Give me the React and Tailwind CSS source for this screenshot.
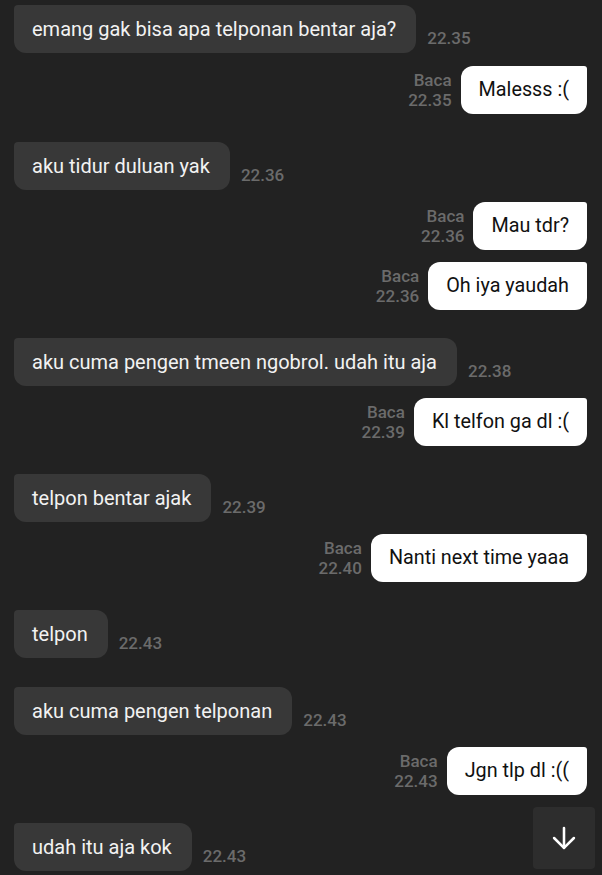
import { ArrowDown } from "lucide-react";

const messages = [
  { from: "them", text: "emang gak bisa apa telponan bentar aja?", time: "22.35" },
  { from: "me", text: "Malesss :(", time: "22.35" },
  { from: "them", text: "aku tidur duluan yak", time: "22.36" },
  { from: "me", text: "Mau tdr?", time: "22.36" },
  { from: "me", text: "Oh iya yaudah", time: "22.36" },
  { from: "them", text: "aku cuma pengen tmeen ngobrol. udah itu aja", time: "22.38" },
  { from: "me", text: "Kl telfon ga dl :(", time: "22.39" },
  { from: "them", text: "telpon bentar ajak", time: "22.39" },
  { from: "me", text: "Nanti next time yaaa", time: "22.40" },
  { from: "them", text: "telpon", time: "22.43" },
  { from: "them", text: "aku cuma pengen telponan", time: "22.43" },
  { from: "me", text: "Jgn tlp dl :((", time: "22.43" },
  { from: "them", text: "udah itu aja kok", time: "22.43" },
];

const Incoming = ({ text, time, space }) => (
  <div className={`flex items-end gap-[11px] pl-[14px] ${space}`}>
    <div className="h-[48px] flex items-center bg-[#383838] text-[#f2f2f2] rounded-[12px] rounded-tl-[4px] pl-[18px] pr-[20px] text-[20px]">
      {text}
    </div>
    <span className="mb-[6px] text-[17px] font-medium text-[#6b6b6b] leading-none">{time}</span>
  </div>
);

const Outgoing = ({ text, time, space }) => (
  <div className={`flex items-center justify-end gap-[9px] pr-[15px] ${space}`}>
    <div className="flex flex-col items-end text-[17px] font-medium text-[#6b6b6b] leading-[20px]">
      <span>Baca</span>
      <span>{time}</span>
    </div>
    <div className="h-[48px] flex items-center bg-white text-[#111] rounded-[12px] rounded-tr-[3px] px-[18px] text-[19.8px]">
      {text}
    </div>
  </div>
);

export default function App() {
  return (
    <div
      className="relative h-[875px] w-full overflow-hidden bg-[#222222]"
      style={{ fontFamily: "Roboto, 'Liberation Sans', sans-serif" }}
    >
      {messages.map((m, i) => {
        const prev = messages[i - 1];
        let space = "mt-[5px]";
        if (i === 1) space = "mt-[13px]";
        else if (i > 0 && m.from === "me") space = "mt-[12px]";
        else if (i > 0 && prev.from === "them") space = "mt-[29px]";
        else if (i > 0) space = "mt-[28px]";
        return m.from === "them" ? (
          <Incoming key={i} text={m.text} time={m.time} space={space} />
        ) : (
          <Outgoing key={i} text={m.text} time={m.time} space={space} />
        );
      })}
      <button className="absolute left-[533px] top-[807px] w-[62px] h-[62px] rounded-[4px] bg-[#2d2d2d] flex items-center justify-center text-white">
        <ArrowDown size={34} strokeWidth={1.8} />
      </button>
    </div>
  );
}
